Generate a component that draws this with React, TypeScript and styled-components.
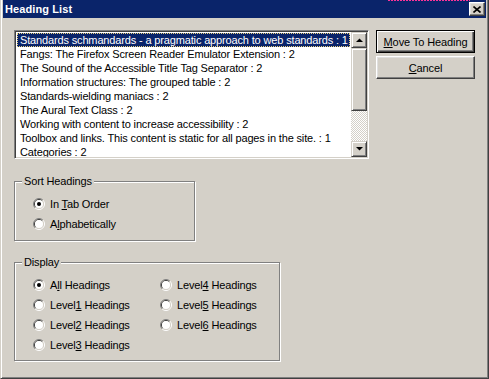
import React from "react";
import styled, { createGlobalStyle } from "styled-components";

const headings = [
  "Standards schmandards - a pragmatic approach to web standards : 1",
  "Fangs: The Firefox Screen Reader Emulator Extension : 2",
  "The Sound of the Accessible Title Tag Separator : 2",
  "Information structures: The grouped table : 2",
  "Standards-wielding maniacs : 2",
  "The Aural Text Class : 2",
  "Working with content to increase accessibility : 2",
  "Toolbox and links. This content is static for all pages in the site. : 1",
  "Categories : 2",
];

// [before, access key, after]
type Label = [string, string, string];

const sortOptions: { label: Label; checked: boolean }[] = [
  { label: ["In ", "T", "ab Order"], checked: true },
  { label: ["A", "l", "phabetically"], checked: false },
];

const displayOptions: { label: Label; checked: boolean }[] = [
  { label: ["A", "l", "l Headings"], checked: true },
  { label: ["Level", "1", " Headings"], checked: false },
  { label: ["Level", "2", " Headings"], checked: false },
  { label: ["Level", "3", " Headings"], checked: false },
  { label: ["Level", "4", " Headings"], checked: false },
  { label: ["Level", "5", " Headings"], checked: false },
  { label: ["Level", "6", " Headings"], checked: false },
];

const GlobalStyle = createGlobalStyle`
  html, body {
    margin: 0;
    padding: 0;
    background: #d4d0c8;
  }
  body {
    font-family: "Liberation Sans", Arial, sans-serif;
    font-size: 11px;
    letter-spacing: -0.15px;
    color: #000;
  }
`;

const Window = styled.div`
  position: relative;
  width: 489px;
  height: 379px;
  box-sizing: border-box;
  background: #d4d0c8;
  border-left: 1px solid #d4d0c8;
  border-right: 1px solid #404040;
  border-bottom: 1px solid #404040;
  box-shadow: inset 1px 0 0 #fff, inset -1px -1px 0 #808080;
  padding: 0 2px 2px 2px;
  display: flex;
  flex-direction: column;
`;

const DottedMark = styled.span`
  position: absolute;
  top: 0;
  left: 387px;
  width: 82px;
  height: 1px;
  background: repeating-linear-gradient(
    90deg,
    #ff3399 0 2px,
    transparent 2px 3px
  );
`;

const TitleBar = styled.div`
  height: 18px;
  background: #0a246a;
  display: flex;
  align-items: center;
  justify-content: space-between;
  padding: 0 1px 0 2px;
`;

const Title = styled.span`
  color: #fff;
  font-weight: bold;
  font-size: 11px;
  letter-spacing: 0.1px;
`;

const Bevel = styled.div`
  box-sizing: border-box;
  background: #d4d0c8;
  border: 1px solid;
  border-color: #fff #404040 #404040 #fff;
  box-shadow: inset -1px -1px 0 #808080, inset 1px 1px 0 #dfdfdf;
`;

const CloseButton = styled(Bevel)`
  width: 16px;
  height: 14px;
  display: flex;
  align-items: center;
  justify-content: center;
`;

const Body = styled.div`
  padding: 12px 11px 0 11px;
  display: flex;
  flex-direction: column;
`;

const TopRow = styled.div`
  display: flex;
  gap: 7px;
`;

const ListBox = styled.div`
  width: 357px;
  height: 129px;
  box-sizing: border-box;
  background: #fff;
  border: 1px solid;
  border-color: #808080 #fff #fff #808080;
  box-shadow: inset 1px 1px 0 #404040, inset -1px -1px 0 #d4d0c8;
  padding: 1px;
  display: flex;
`;

const Items = styled.div`
  flex: 1;
  padding: 1px;
  overflow: hidden;
`;

const Item = styled.div<{ $selected?: boolean }>`
  height: 14px;
  box-sizing: border-box;
  line-height: 12px;
  padding-left: 2px;
  white-space: nowrap;
  border: 1px dotted ${(p) => (p.$selected ? "#e8cf7c" : "transparent")};
  background: ${(p) => (p.$selected ? "#0a246a" : "transparent")};
  color: ${(p) => (p.$selected ? "#fff" : "#000")};
`;

const ScrollBar = styled.div`
  width: 16px;
  display: flex;
  flex-direction: column;
`;

const ScrollButton = styled.div`
  width: 16px;
  height: 16px;
  box-sizing: border-box;
  background: #d4d0c8;
  border: 1px solid;
  border-color: #d4d0c8 #404040 #404040 #d4d0c8;
  box-shadow: inset 1px 1px 0 #fff, inset -1px -1px 0 #808080;
  display: flex;
  align-items: center;
  justify-content: center;
`;

const Thumb = styled(ScrollButton)`
  height: 63px;
`;

const Track = styled.div`
  flex: 1;
  background: repeating-conic-gradient(#fff 0 25%, #d4d0c8 0 50%) 0 0 / 2px
    2px;
`;

const ButtonColumn = styled.div`
  display: flex;
  flex-direction: column;
  gap: 3px;
`;

const PushButton = styled.button<{ $default?: boolean }>`
  width: 99px;
  height: 23px;
  box-sizing: border-box;
  margin: 0;
  padding: 0;
  background: #d4d0c8;
  font-family: "Liberation Sans", Arial, sans-serif;
  font-size: 11px;
  letter-spacing: -0.1px;
  color: #000;
  border: 1px solid;
  border-color: ${(p) =>
    p.$default ? "#000" : "#fff #404040 #404040 #fff"};
  box-shadow: ${(p) =>
    p.$default
      ? "inset 1px 1px 0 #fff, inset -1px -1px 0 #404040, inset -2px -2px 0 #808080"
      : "inset -1px -1px 0 #808080, inset 1px 1px 0 #dfdfdf"};
`;

const GroupBox = styled.div<{ $w: number; $h: number; $mt: number }>`
  position: relative;
  width: ${(p) => p.$w}px;
  height: ${(p) => p.$h}px;
  margin-top: ${(p) => p.$mt}px;
  box-sizing: border-box;
  border: 1px solid #808080;
  box-shadow: inset 1px 1px 0 #fff, 1px 1px 0 #fff;
  padding: 12px 0 0 18px;
`;

const Legend = styled.span`
  position: absolute;
  top: -7px;
  left: 7px;
  padding: 0 2px;
  line-height: 13px;
  background: #d4d0c8;
`;

const RadioGrid = styled.div<{ $cols: string }>`
  display: grid;
  grid-template-columns: ${(p) => p.$cols};
  grid-template-rows: repeat(4, 20px);
  grid-auto-flow: column;
`;

const RadioRow = styled.label`
  display: flex;
  align-items: center;
  gap: 5px;
  height: 20px;
  white-space: nowrap;
`;

const Key = styled.span`
  text-decoration: underline;
`;

const AccessText: React.FC<{ label: Label }> = ({ label }) => (
  <span>
    {label[0]}
    <Key>{label[1]}</Key>
    {label[2]}
  </span>
);

const RadioMark: React.FC<{ checked: boolean }> = ({ checked }) => (
  <svg width="12" height="12" viewBox="0 0 12 12">
    <path d="M2.1 9.9 A5.5 5.5 0 0 1 9.9 2.1" fill="none" stroke="#808080" strokeWidth="1" />
    <path d="M9.9 2.1 A5.5 5.5 0 0 1 2.1 9.9" fill="none" stroke="#ffffff" strokeWidth="1" />
    <path d="M2.8 9.2 A4.5 4.5 0 0 1 9.2 2.8" fill="none" stroke="#404040" strokeWidth="1" />
    <path d="M9.2 2.8 A4.5 4.5 0 0 1 2.8 9.2" fill="none" stroke="#d4d0c8" strokeWidth="1" />
    <circle cx="6" cy="6" r="4" fill="#fff" />
    {checked && <circle cx="6" cy="6" r="2" fill="#000" />}
  </svg>
);

const Radio: React.FC<{ label: Label; checked: boolean }> = ({ label, checked }) => (
  <RadioRow>
    <RadioMark checked={checked} />
    <AccessText label={label} />
  </RadioRow>
);

const Arrow: React.FC<{ down?: boolean }> = ({ down }) => (
  <svg width="7" height="4" viewBox="0 0 7 4">
    <polygon points={down ? "0,0 7,0 3.5,3.5" : "0,4 7,4 3.5,0.5"} fill="#000" />
  </svg>
);

const App: React.FC = () => {
  return (
    <>
      <GlobalStyle />
      <Window>
        <DottedMark />
        <TitleBar>
          <Title>Heading List</Title>
          <CloseButton>
            <svg width="8" height="7" viewBox="0 0 8 7">
              <path d="M0.5 0.5 L7.5 6.5 M7.5 0.5 L0.5 6.5" stroke="#000" strokeWidth="1.6" />
            </svg>
          </CloseButton>
        </TitleBar>
        <Body>
          <TopRow>
            <ListBox>
              <Items>
                {headings.map((h, i) => (
                  <Item key={h} $selected={i === 0}>
                    {h}
                  </Item>
                ))}
              </Items>
              <ScrollBar>
                <ScrollButton>
                  <Arrow />
                </ScrollButton>
                <Thumb />
                <Track />
                <ScrollButton>
                  <Arrow down />
                </ScrollButton>
              </ScrollBar>
            </ListBox>
            <ButtonColumn>
              <PushButton $default>
                <AccessText label={["", "M", "ove To Heading"]} />
              </PushButton>
              <PushButton>
                <AccessText label={["", "C", "ancel"]} />
              </PushButton>
            </ButtonColumn>
          </TopRow>
          <GroupBox $w={181} $h={60} $mt={22}>
            <Legend>Sort Headings</Legend>
            <RadioGrid $cols="auto">
              {sortOptions.map((o) => (
                <Radio key={o.label.join("")} label={o.label} checked={o.checked} />
              ))}
            </RadioGrid>
          </GroupBox>
          <GroupBox $w={266} $h={99} $mt={21}>
            <Legend>Display</Legend>
            <RadioGrid $cols="127px auto">
              {displayOptions.map((o) => (
                <Radio key={o.label.join("")} label={o.label} checked={o.checked} />
              ))}
            </RadioGrid>
          </GroupBox>
        </Body>
      </Window>
    </>
  );
};

export default App;
